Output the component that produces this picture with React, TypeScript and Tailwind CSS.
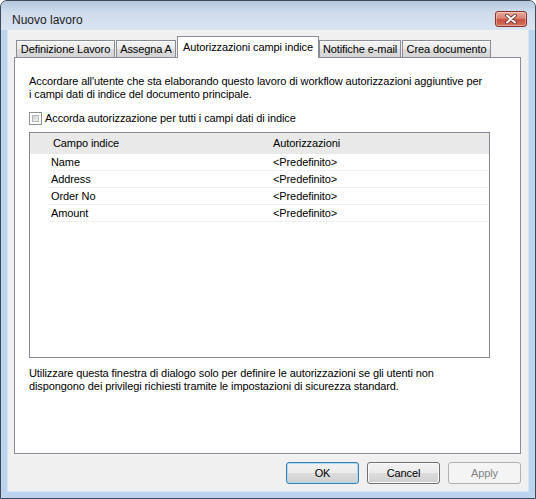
import React from 'react'

const schede = [
  { label: 'Definizione Lavoro', cls: 'w-[99px]' },
  { label: 'Assegna A', cls: 'ml-[1px] w-[60px]' },
  { label: 'Autorizzazioni campi indice', cls: 'ml-[1px] w-[142px]', attiva: true },
  { label: 'Notifiche e-mail', cls: 'w-[82px]' },
  { label: 'Crea documento', cls: 'ml-[1px] w-[89px]' },
]

const campi = ['Name', 'Address', 'Order No', 'Amount']

function BottoneChiudi() {
  return (
    <div className="mt-[10px] flex h-[16px] w-[32px] items-center justify-center rounded-[3px] border border-[#86352b] bg-[linear-gradient(#e9a99b,#d98373_45%,#c8503f_55%,#d5735e)] shadow-[inset_0_0_0_1px_rgba(255,255,255,0.35)]">
      <svg width="12" height="10" viewBox="0 0 12 10">
        <path d="M2 1.5 L10 8.5 M10 1.5 L2 8.5" stroke="#5a2a24" strokeWidth="3.6" strokeLinecap="round" />
        <path d="M2 1.5 L10 8.5 M10 1.5 L2 8.5" stroke="#ffffff" strokeWidth="2" strokeLinecap="round" />
      </svg>
    </div>
  )
}

function Scheda({ label, cls, attiva }: { label: string; cls: string; attiva?: boolean }) {
  if (attiva) {
    return (
      <div className={`${cls} relative z-10 -mb-px h-[22px] border border-b-0 border-[#898c95] bg-white pt-[4px] text-center leading-[13px]`}>
        {label}
      </div>
    )
  }
  return (
    <div className={`${cls} h-[17px] border border-b-0 border-[#898c95] bg-[linear-gradient(#f3f3f3,#ebebeb_50%,#dddddd_50%,#d4d4d4)] pt-[2px] text-center leading-[13px] shadow-[inset_0_1px_0_#ffffff]`}>
      {label}
    </div>
  )
}

function Bottone({ label, tipo }: { label: string; tipo?: 'default' | 'disabilitato' }) {
  if (tipo === 'disabilitato') {
    return (
      <div className="flex h-[22px] w-[73px] items-center justify-center rounded-[3px] border border-[#adb2b5] bg-[#f4f4f4] text-[#838383]">
        {label}
      </div>
    )
  }
  const bordo = tipo === 'default'
    ? 'border-[#3c7fb1] shadow-[inset_0_0_0_1px_#a6dcf6]'
    : 'border-[#707070] shadow-[inset_0_0_0_1px_#fbfbfb]'
  return (
    <div className={`flex h-[22px] w-[73px] items-center justify-center rounded-[3px] border ${bordo} bg-[linear-gradient(#f2f2f2,#ebebeb_50%,#dddddd_50%,#cfcfcf)]`}>
      {label}
    </div>
  )
}

export default function App() {
  return (
    <div className="h-[499px] w-[536px] overflow-hidden rounded-t-[7px] border border-[#3f4a57] bg-[#bcd4ed] font-['Liberation_Sans',Arial,sans-serif] text-[11px] tracking-[-0.1px] text-black">
      <div className="flex h-[29px] items-start justify-between bg-[linear-gradient(#b3c7df,#cfdcec_40%,#d9e4f1)] pl-[11px] pr-[8px]">
        <span className="mt-[12px] text-[12px] leading-[14px] tracking-normal text-[#1b1b1b]">Nuovo lavoro</span>
        <BottoneChiudi />
      </div>

      <div className="mx-[7px] flex h-[461px] flex-col bg-[#f0f0f0] shadow-[0_0_0_1px_#d9e5f3]">
        <div className="flex h-[27px] items-end pl-[8px] pt-[6px]">
          {schede.map((s) => (
            <Scheda key={s.label} label={s.label} cls={s.cls} attiva={s.attiva} />
          ))}
        </div>

        <div className="ml-[6px] flex h-[397px] w-[507px] flex-col border border-[#898c95] bg-white pl-[14px] pt-[17px]">
          <p className="leading-[13px]">
            Accordare all'utente che sta elaborando questo lavoro di workflow autorizzazioni aggiuntive per
            <br />
            i campi dati di indice del documento principale.
          </p>

          <label className="mt-[11px] flex items-center gap-[3px] leading-[13px]">
            <span className="flex h-[13px] w-[13px] border border-[#8e8f8f] bg-white p-[2px]">
              <span className="h-full w-full border border-[#b5b8bb] bg-[linear-gradient(135deg,#cfcfcf,#f5f5f5)]" />
            </span>
            Accorda autorizzazione per tutti i campi dati di indice
          </label>

          <div className="mt-[7px] h-[226px] w-[461px] border border-[#828790] bg-white">
            <div className="flex h-[21px] items-center bg-[#e9e9e9]">
              <div className="w-[240px] pl-[23px]">Campo indice</div>
              <div className="pl-[3px]">Autorizzazioni</div>
            </div>
            {campi.map((c) => (
              <div key={c} className="ml-[18px] flex h-[17px] items-center border-b border-[#f0f0f0] leading-[16px]">
                <div className="w-[222px] pl-[3px]">{c}</div>
                <div className="pl-[3px]">&lt;Predefinito&gt;</div>
              </div>
            ))}
          </div>

          <p className="mt-[9px] leading-[13px]">
            Utilizzare questa finestra di dialogo solo per definire le autorizzazioni se gli utenti non
            <br />
            dispongono dei privilegi richiesti tramite le impostazioni di sicurezza standard.
          </p>
        </div>

        <div className="mt-[8px] flex justify-end gap-[8px] pr-[7px]">
          <Bottone label="OK" tipo="default" />
          <Bottone label="Cancel" />
          <Bottone label="Apply" tipo="disabilitato" />
        </div>
      </div>
    </div>
  )
}
